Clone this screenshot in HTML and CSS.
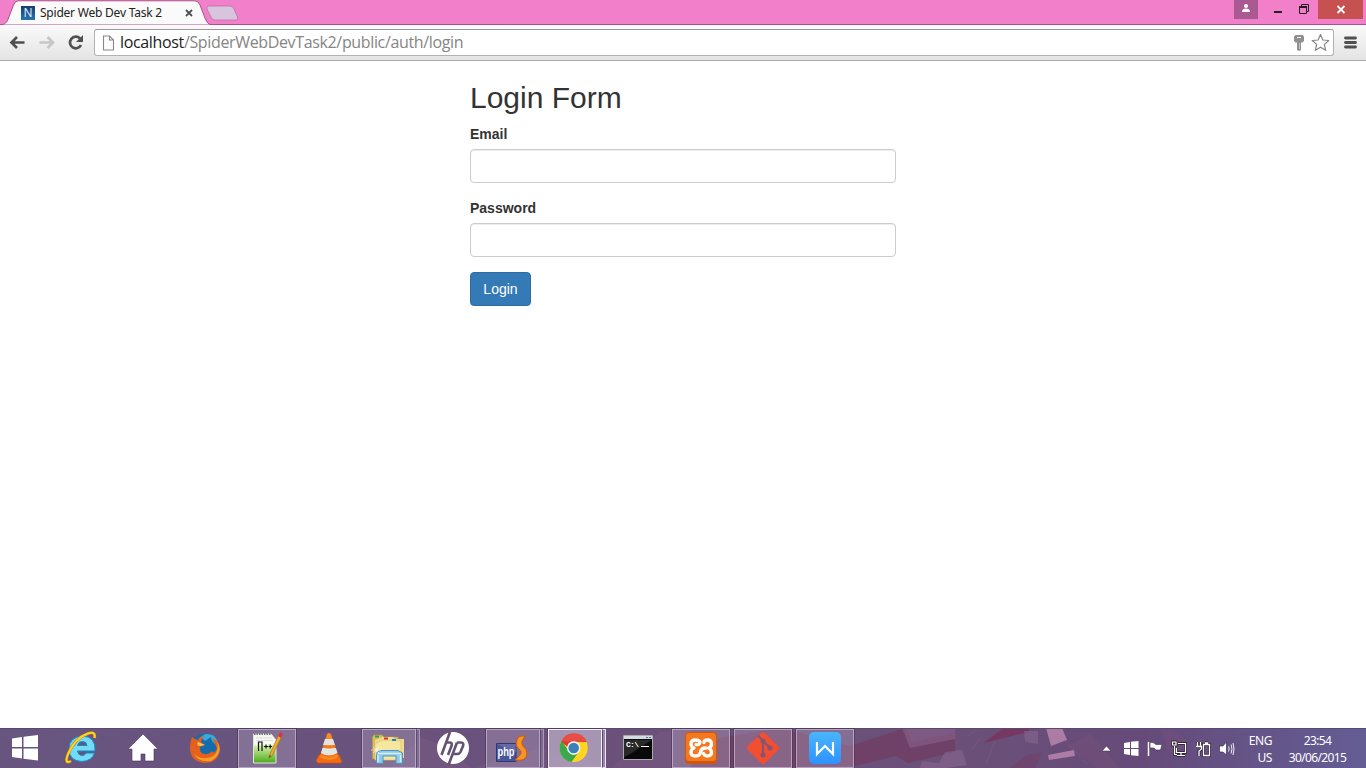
FILE: index.html
```html
<!DOCTYPE html>
<html lang="en">
<head>
<meta charset="utf-8">
<title>Spider Web Dev Task 2</title>
<link rel="stylesheet" href="styles.css">
</head>
<body>
<div class="desktop">
  <header class="titlebar">
    <div class="tab">
      <svg class="tab-shape" width="240" height="25" viewBox="0 0 240 25">
        <path d="M0 25C5 24.500 7 22.500 8.500 18L13.500 5Q15 1 18 .8H195Q198.500 1 200 5L205 18Q207 24 211 25Z" fill="#fbfafa" stroke="#ad5089"/>
        <path d="M209 6H230Q233 6 234 9L237.500 17Q238.500 20 236 20H215Q212 20 211 17L207 9Q206 6 209 6Z" fill="#d8c4dc" stroke="#bd72a7" stroke-width=".8"/>
      </svg>
      <span class="favicon">N</span>
      <span class="tab-title">Spider Web Dev Task 2</span>
      <svg class="tab-close" width="8" height="8" viewBox="0 0 8 8"><path d="M1 1L7 7M7 1L1 7" stroke="#505050" stroke-width="1.8"/></svg>
    </div>
    <div class="window-controls">
      <span class="user"><svg width="24" height="19" viewBox="0 0 24 19"><circle cx="12" cy="6" r="2" fill="#fff"/><path d="M8 12V10.500Q9 8.500 12 8.500T16 10.500V12Z" fill="#fff"/></svg></span>
      <svg class="minmax" width="60" height="19" viewBox="0 0 60 19"><path d="M16 12H24" stroke="#222" stroke-width="2"/><path d="M41.500 6.500H48.500V13.500H41.500ZM43.500 6V4.500H50.500V11.500H49" fill="none" stroke="#222"/><path d="M41 7H49" stroke="#222" stroke-width="2"/></svg>
      <span class="close"><svg width="45" height="19" viewBox="0 0 45 19"><path d="M19.500 6L26.500 13M26.500 6L19.500 13" stroke="#fff" stroke-width="1.800"/></svg></span>
    </div>
  </header>
  <nav class="toolbar">
    <svg class="nav-icons" width="94" height="36" viewBox="0 25 94 36">
      <path d="M24.500 42.500H12M17 37L11.500 42.500L17 48" fill="none" stroke="#505050" stroke-width="2.700"/>
      <path d="M39.500 42.500H52M47.500 37L53 42.500L47.500 48" fill="none" stroke="#c6c6c6" stroke-width="2.700"/>
      <path d="M80 38.500A5.800 5.800 0 1 0 81 45" fill="none" stroke="#505050" stroke-width="2.700"/><path d="M83 35V42H76Z" fill="#505050"/>
    </svg>
    <div class="omnibox">
      <svg class="page-icon" width="13" height="16" viewBox="0 0 13 16"><path d="M1.500 1H7.500L11.500 5V15H1.500ZM7.500 1V5H11.500" fill="#fdfdfd" stroke="#888" stroke-width="1.100"/></svg>
      <span class="url"><b>localhost</b>/SpiderWebDevTask2/public/auth/login</span>
      <svg class="key" width="12" height="16" viewBox="0 0 12 16"><path d="M2.500 0H9.500L11 1.500V6L9.500 7.500H8V15L6 16L4 15V7.500H2.500L1 6V1.500Z" fill="#909090"/><path d="M4 2.500H8" stroke="#fff"/><path d="M6.500 8V14" stroke="#c4c4c4"/></svg>
      <svg class="star" width="20" height="19" viewBox="0 0 20 19"><path d="M10.500 1.500L12.900 7L18.800 7.500L14.300 11.400L15.700 17.300L10.500 14.200L5.300 17.300L6.700 11.400L2.200 7.500L8.100 7Z" fill="#fff" stroke="#858585" stroke-width="1.200" stroke-linejoin="round"/></svg>
    </div>
    <svg class="menu" width="13" height="14" viewBox="0 0 13 14"><path d="M1.500 2H11.500M1.500 6.500H11.500M1.500 11H11.500" stroke="#505050" stroke-width="2.800" stroke-linecap="round"/></svg>
  </nav>
  <main class="page">
    <form class="login">
      <h2>Login Form</h2>
      <label for="email">Email</label>
      <input id="email" type="email">
      <label for="password">Password</label>
      <input id="password" type="password">
      <button type="button">Login</button>
    </form>
  </main>
  <footer class="taskbar">
    <svg class="wallpaper" width="1366" height="40" viewBox="0 0 1366 40">
      <defs>
        <linearGradient id="wall"><stop stop-color="#675580"/><stop offset=".55" stop-color="#6c5079"/><stop offset=".72" stop-color="#6a5079"/><stop offset=".83" stop-color="#664a79"/><stop offset="1" stop-color="#635d94"/></linearGradient>
      </defs>
      <path d="M0 0H1366V40H0Z" fill="url(#wall)"/>
      <path d="M690 40L720 10L780 0L850 18L905 0L912 14L955 5V24L908 35L896 28L855 38Z" fill="#713a61" opacity=".7"/>
      <path d="M902 0H955V11L910 20Z" fill="#8b608b" opacity=".6"/>
      <path d="M983 15L1004 0H1030L1028 4Z" fill="#763861"/>
      <path d="M939 35L945 24L962 22L967 37L947 40H920L922 33ZM1024 3H1038V16L1025 14Z" fill="#8e6a93" opacity=".5"/>
      <path d="M1010 40L1026 27L1042 25L1035 40Z" fill="#75395f" opacity=".4"/>
      <path d="M1046 0H1062L1067 12L1051 18ZM1048 27L1074 22L1075 28L1049 32Z" fill="#ac7ca5"/>
      <path d="M1067 18L1090 6L1120 40H1098ZM1160 0H1170L1190 16L1170 27Z" fill="#81527a" opacity=".28"/>
      <path d="M972 22L980 10M986 36L995 13M1063 11L1087 36M978 0L968 8" stroke="#9c83aa" stroke-width=".7" opacity=".25"/>
      <path d="M390 40L420 9L440 16L472 40L540 20L610 40L660 4L690 0V40Z" fill="#987099" opacity=".15"/>
      <path d="M0 .5H1366" stroke="#574a70"/>
    </svg>
    <div class="task-items">
      <svg class="start" width="50" height="40" viewBox="0 0 50 40"><path d="M12 10.500L22 9V19H12ZM23.500 8.800L38 7V19H23.500ZM12 20.500H22V30.500L12 29ZM23.500 20.500H38V32.500L23.500 30.700Z" fill="#fff"/></svg>
      <div class="task"><svg viewBox="0 0 62 40">
        <path d="M44.500 25H36Q34.500 28 31.500 27.500Q28 27 27.500 23H45Q46 8.500 32.500 8Q19 9 19 21Q19 33 32 33.500Q42 33 44.500 25ZM27.500 17.500Q28.500 13.500 32.500 13.500T37 17.500Z" fill="#73daf7" stroke="#168ac5"/>
        <path d="M21 33Q14 37 18 26Q25 10 38 5.500Q46 3 44.500 10" fill="none" stroke="#b88513" stroke-width="3"/><path d="M21 33Q14 37 18 26Q25 10 38 5.500Q46 3 44.500 10" fill="none" stroke="#ffd326" stroke-width="2"/>
      </svg></div>
      <div class="task"><svg viewBox="0 0 62 40"><path d="M31 6L46 21H42V33H33V26H29V33H20V21H16Z" fill="#fff" stroke="#463857" stroke-width=".6"/></svg></div>
      <div class="task"><svg viewBox="0 0 62 40">
        <circle cx="31" cy="20" r="14.500" fill="#126cae"/><path d="M31 6Q43 5 44 17Q37 15 37 9L31 13L27 9Z" fill="#38aad9"/>
        <path d="M18 9Q21 12 24 12Q26 8 29 8L27 14L31 17L26 19Q25 25 31 26Q35 27 38 23Q39 27 43 21Q41 15 38 10Q46 13 46 22Q44 35 30 35Q16 33 16 20Q16 14 18 9Z" fill="#e5601a"/>
        <path d="M20 25Q24 31 32 30Q40 30 43 23Q45 15 42 11Q51 25 37 33Q24 35 20 25Z" fill="#f7ae2b" opacity=".8"/><path d="M24 14L31 17L26 18Q22 18 24 14" fill="#ffc157"/>
      </svg></div>
      <div class="task running"><svg viewBox="0 0 62 40">
        <defs><linearGradient id="note" x2="0" y2="1"><stop offset=".35" stop-color="#f7f8f4"/><stop offset=".42" stop-color="#d2eda2"/><stop offset="1" stop-color="#48ab19"/></linearGradient></defs>
        <path d="M17.500 6H35L40 12V35H17.500Z" fill="url(#note)" stroke="#e4e4df"/><path d="M18 6H35" stroke="#777" stroke-width="2" stroke-dasharray="1.500 1"/><path d="M20 10H36M20 12.500H37" stroke="#cbd3cb" stroke-width=".7"/>
        <path d="M22.500 23V14H26V23M28 18.500H32M30 16.500V20.500M32.500 18.500H36M34.200 16.500V20.500" fill="none" stroke="#111" stroke-width="1.200"/>
        <path d="M34 26L43 6L46 8L36 28L33 30Z" fill="#f0ac28" stroke="#9e681c" stroke-width=".6"/><path d="M42 8L44 4L47 6L45 10Z" fill="#d43643"/><path d="M33 30L34 27L35 28Z" fill="#382d25"/>
      </svg></div>
      <div class="task"><svg viewBox="0 0 62 40">
        <path d="M21 27H41L44 34L42 35H20L18 33Z" fill="#f36c11" stroke="#d85008" stroke-width=".7"/>
        <path d="M29 6Q31 4 33 6L40 29Q31 35 22 29Z" fill="#fa8921"/><path d="M27 11H35L37 17H25ZM24.500 20H38L39.500 25Q31 30 23 25Z" fill="#e3e5e3"/><path d="M25 18Q31 21 37.500 18M22.500 26Q31 31 39.500 26" fill="none" stroke="#f47818" stroke-width="2"/>
      </svg></div>
      <div class="task running stack"><svg viewBox="0 0 62 40">
        <path d="M12.500 9L14 7H22L24 9H38V31H12.500Z" fill="#d9bb60" stroke="#bd9c43" stroke-width=".6"/><path d="M15 12L23 9H33L35 11H44V30H15Z" fill="#f1dc8a"/><path d="M16 15L23 12L41 13V32H15Z" fill="#f6e7a0" stroke="#d8bd69" stroke-width=".6"/>
        <path d="M15 8.500H19" stroke="#2ba243" stroke-width="2"/><path d="M24 10.500H28" stroke="#cf342d" stroke-width="2"/><path d="M32 12H36" stroke="#277fc6" stroke-width="2"/>
        <path d="M16.500 35.500V24.500L20 22.500H38L42.500 25V35.500H36V28H23V35.500Z" fill="#8ec9ea" stroke="#4c96bd"/><path d="M18 25.500H41M18 27V34M40.500 27V34" stroke="#d5f0fb" stroke-width="1.500"/><path d="M16 17V27M11 22H21M13 19L19 25M19 19L13 25" stroke="#fff" stroke-width=".7" opacity=".8"/>
      </svg></div>
      <div class="task"><svg viewBox="0 0 62 40"><circle cx="31" cy="20" r="16" fill="#fff"/><path d="M28 4L19.500 27M24 14.500H28Q30.500 14.500 29.500 18L26 27M35 14.500L26.500 37M35 14.500H39Q42 14.500 41 18L38.500 24Q37.500 26 35 26H31" fill="none" stroke="#655371" stroke-width="2.600"/></svg></div>
      <div class="task running stack"><svg viewBox="0 0 62 40">
        <path d="M12.500 15.500H32V33.500H12.500Z" fill="#4c559a" stroke="#30396c"/><path d="M13 16L32 24V16H13Z" fill="#7679b5" opacity=".6"/><text class="php" x="13.500" y="28" textLength="17" lengthAdjust="spacingAndGlyphs">php</text>
        <path d="M41 8Q34 7 32.500 13Q31 19 36 22Q39 25 34 29L31 32Q42 34 43 26Q43 21 39 18Q36 15 41 8Z" fill="#f89327" stroke="#ca5908"/>
      </svg></div>
      <div class="task running active stack"><svg viewBox="0 0 62 40">
        <circle cx="27.700" cy="20" r="14" fill="#ffd51e"/><path d="M15 14A14 14 0 0 1 40.500 14H27.700A6 6 0 0 0 22 19Z" fill="#dc3b34"/><path d="M15.500 13A14 14 0 0 0 25.500 34L32 25A6 6 0 0 1 22 22Z" fill="#39a94b"/><path d="M15.500 13A14 14 0 0 1 40.500 13L33 14H27Z" fill="#e84e43"/>
        <circle cx="27.700" cy="20" r="6.700" fill="#f5f5f5"/><circle cx="27.700" cy="20" r="5.300" fill="#3b82bd"/>
      </svg></div>
      <div class="task"><svg viewBox="0 0 62 40"><path d="M15.500 7.500H44.500V31.500H15.500Z" fill="#090909" stroke="#aaa"/><path d="M16 8H44V11H16Z" fill="#d2dce3"/><path d="M38 9.500H40M41 9.500H43" stroke="#567183"/><path d="M16 12H44L22 26L16 29Z" fill="#444" opacity=".55"/><text class="cmd" x="18" y="18.500" textLength="13">C:\</text><path d="M33 18.500H41" stroke="#fff"/></svg></div>
      <div class="task running"><svg viewBox="0 0 62 40">
        <rect x="15" y="4" width="32" height="32" rx="4" fill="#cc580d"/><rect x="16" y="5" width="30" height="28" rx="3" fill="#f5781e"/>
        <path d="M26 16.500Q30 17 30 14Q29 12 25.500 12Q21 12 21 16Q21 19 24 20Q21 21 21 24.500Q21 28 25.500 28Q30 28 30.500 24Q31 20 36 20M34 14.500Q34 12 37.500 12Q41.500 12 41.500 16Q41.500 19 38.500 20Q41.500 21 41.500 24.500Q41.500 28 37 28Q34.500 28 33.500 25.500" fill="none" stroke="#fff" stroke-width="3.300" stroke-linecap="round" stroke-linejoin="round"/>
      </svg></div>
      <div class="task running"><svg viewBox="0 0 62 40"><path d="M29.500 4.800Q31 3.300 32.500 4.800L46.500 18.500Q48 20 46.500 21.500L32.500 35.500Q31 37 29.500 35.500L15.500 21.500Q14 20 15.500 18.500Z" fill="#f14e32"/><path d="M26 7.500L31 13V27M31 13L38 20" fill="none" stroke="#835570" stroke-width="2"/><g fill="#835570"><circle cx="31" cy="13" r="2.500"/><circle cx="31" cy="27" r="2.500"/><circle cx="38" cy="20" r="2.500"/></g></svg></div>
      <div class="task running"><svg viewBox="0 0 62 40"><defs><linearGradient id="wps" x2="0" y2="1"><stop stop-color="#49b5fa"/><stop offset="1" stop-color="#2e92ff"/></linearGradient></defs><rect x="15" y="4" width="32" height="32" rx="5" fill="url(#wps)"/><path d="M23 14V26L31 18L39 26V14" fill="none" stroke="#fff" stroke-width="2.200"/></svg></div>
    </div>
    <div class="tray">
      <svg width="150" height="40" viewBox="1092 0 150 40">
        <path d="M1102 23L1106.500 18L1111 23Z" fill="#fff" stroke="#443653" stroke-width=".6"/>
        <path d="M1124 15L1130 14V20H1124ZM1131 13.800L1138.500 13V20H1131ZM1124 21H1130V27L1124 26ZM1131 21H1138.500V28L1131 27.200Z" fill="#fff"/>
        <path d="M1148.500 14V28" stroke="#fff" stroke-width="1.500"/><path d="M1150 14.500Q1153 13.500 1156 16.500H1162L1160.500 22H1156L1154 20H1150Z" fill="#fff" stroke="#3e314e" stroke-width=".6"/>
        <path d="M1178 15.500H1185.500V24.500H1176.500V20M1181 25V27.500M1177 27.500H1185M1172.500 14H1176V17H1172.500ZM1174.500 18V26.500H1177" fill="none" stroke="#33283d" stroke-width="3"/>
        <path d="M1178 15.500H1185.500V24.500H1176.500V20M1181 25V27.500M1177 27.500H1185M1172.500 14H1176V17H1172.500ZM1174.500 18V26.500H1177" fill="none" stroke="#fff" stroke-width="1.200"/>
        <path d="M1203.500 16.500H1209.500V27.500H1203.500ZM1205 15H1208M1196 18.500H1201.500V21L1199 23V28M1197.500 14V18M1200.500 14V18" fill="none" stroke="#33283d" stroke-width="3"/><path d="M1203.500 16.500H1209.500V27.500H1203.500ZM1205 15H1208M1196 18.500H1201.500V21L1199 23V28M1197.500 14V18M1200.500 14V18" fill="none" stroke="#fff" stroke-width="1.300"/>
        <path d="M1219.500 18H1223L1226.500 14V27L1223 24H1219.500Z" fill="#fff" stroke="#3e314e" stroke-width=".7"/><path d="M1228.500 18.500Q1230 21 1228.500 23.500M1231 16.500Q1233 21 1231 25.500M1233 15Q1235 21 1233 27" fill="none" stroke="#fff" stroke-width=".9"/>
      </svg>
      <div class="language"><span>ENG</span><span>US</span></div>
      <div class="clock"><span class="time">23:54</span><span class="date">30/06/2015</span></div>
    </div>
  </footer>
</div>
</body>
</html>
```

FILE: styles.css
```css
*, *::before, *::after { box-sizing: border-box; }
body { margin: 0; overflow: hidden; font-family: "Liberation Sans", Arial, sans-serif; }
svg { display: block; flex: none; }
.desktop { width: 1366px; height: 768px; display: flex; flex-direction: column; background: #fff; }
.titlebar { height: 25px; flex: none; display: flex; justify-content: space-between; background: #f17fc9; border-bottom: 1px solid #ad5089; }
.tab { position: relative; width: 240px; height: 25px; display: flex; align-items: flex-start; padding-left: 21px; }
.tab-shape { position: absolute; left: 0; top: 0; }
.favicon { position: relative; width: 14px; height: 14px; margin-top: 6px; background: linear-gradient(#143c71, #2875b0); color: #e5f2fb; font: 12px/14px "Open Sans", sans-serif; text-align: center; }
.tab-title { position: relative; width: 122px; margin: 5px 0 0 5px; font: 12px/16px "Noto Sans", sans-serif; letter-spacing: -.22px; color: #222; white-space: nowrap; }
.tab-close { position: relative; margin: 9px 0 0 23px; }
.window-controls { display: flex; height: 19px; }
.user { width: 24px; background: #a85a91; }
.close { width: 45px; margin-right: 3px; background: #c75050; }
.toolbar { height: 36px; flex: none; display: flex; align-items: flex-start; background: linear-gradient(#fbfafa, #e5e4e4); border-bottom: 1px solid #aaa; }
.omnibox { width: 1240px; height: 27px; margin-top: 4px; display: flex; align-items: center; padding: 0 3px 0 7px; background: #fff; border: 1px solid #b2b2b2; border-radius: 3px; border-top-color: #999; }
.url { margin: 0 auto 0 5px; font: 16px/23px "Open Sans", sans-serif; color: #858585; letter-spacing: -.35px; }
.url b { font-weight: 400; color: #222; }
.key { margin-right: 5px; }
.menu { margin: 11px 0 0 10px; }
.page { height: 667px; flex: none; display: flex; justify-content: center; align-items: flex-start; }
.login { width: 426px; display: flex; flex-direction: column; align-items: flex-start; color: #333; }
.login h2 { margin: 20px 0 10px; font-size: 30px; line-height: 33px; font-weight: 400; }
.login label { font-size: 14px; line-height: 20px; font-weight: 700; margin-bottom: 5px; }
.login input { width: 100%; height: 34px; margin: 0 0 15px; border: 1px solid #ccc; border-radius: 4px; box-shadow: inset 0 1px 1px rgba(0, 0, 0, .075); }
.login button { width: 61px; height: 34px; padding: 0; border: 1px solid #2e6da4; border-radius: 4px; background: #337ab7; color: #fff; font: 14px/20px "Liberation Sans", Arial, sans-serif; }
.taskbar { position: relative; height: 40px; flex: none; display: flex; justify-content: space-between; overflow: hidden; }
.wallpaper { position: absolute; inset: 0; }
.task-items, .tray { position: relative; display: flex; }
.task { position: relative; width: 62px; height: 40px; }
.task > svg { position: relative; width: 62px; height: 40px; }
.running::before { content: ""; position: absolute; left: 2px; top: 1px; width: 58px; height: 39px; background: rgba(190, 174, 203, .32); border: 1px solid rgba(211, 198, 219, .62); outline: 1px solid rgba(65, 48, 80, .5); }
.stack::before { width: 54px; }
.stack::after { content: ""; position: absolute; left: 56px; top: 1px; width: 4px; height: 39px; background: rgba(190, 174, 203, .25); border: 1px solid rgba(211, 198, 219, .5); border-left-color: #5c4b72; }
.active::before { background: rgba(205, 193, 216, .6); border-color: #f3eff5; }
.active::after { background: rgba(205, 193, 216, .5); border-color: #e9e2ed; border-left-color: #5c4b72; }
.php { font: bold 12px "Liberation Sans", sans-serif; fill: #fff; }
.cmd { font: bold 8px "Liberation Mono", monospace; fill: #fff; }
.tray { color: #fff; font: 12px/17px "Noto Sans", sans-serif; }
.language, .clock { display: flex; flex-direction: column; padding-top: 4px; }
.language { width: 30px; align-items: flex-end; letter-spacing: -.4px; }
.language span, .clock span { white-space: nowrap; }
.clock { width: 94px; align-items: center; padding-right: 3px; letter-spacing: -.65px; }
```
